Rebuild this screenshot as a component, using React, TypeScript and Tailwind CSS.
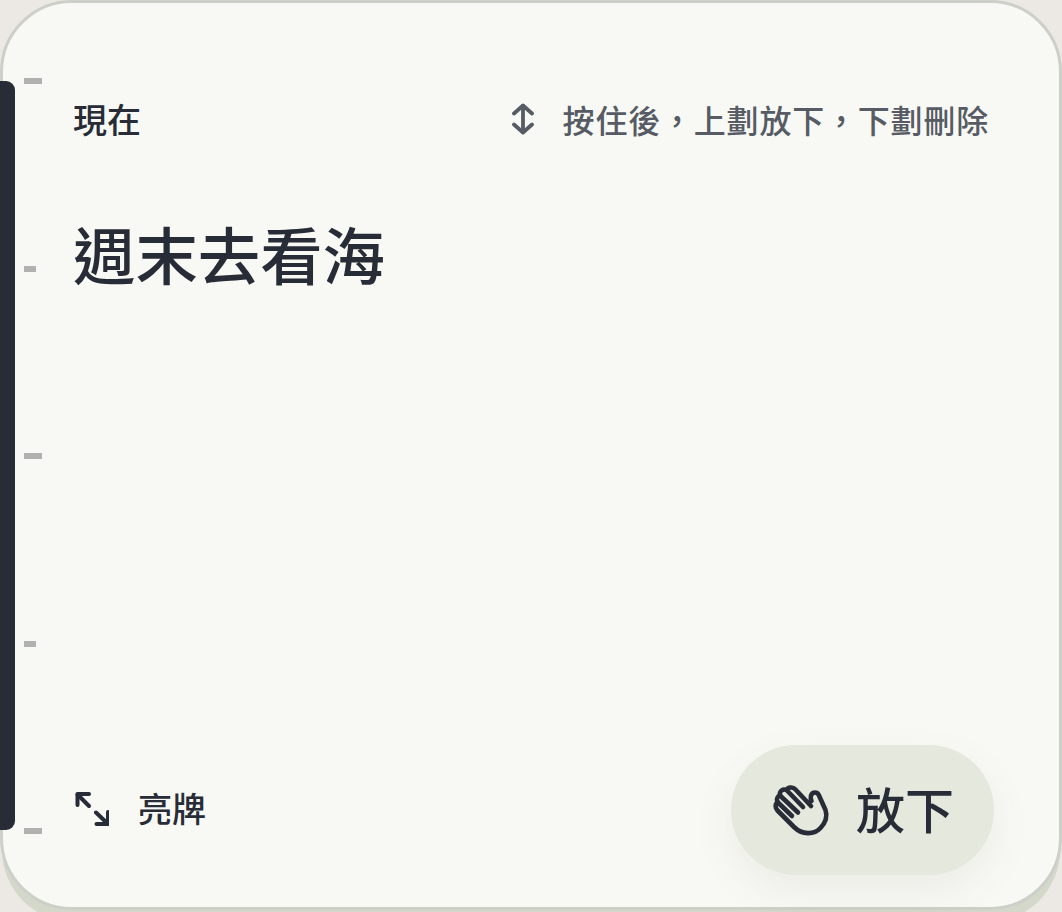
const ticks = ["w-[18px]", "w-3", "w-[18px]", "w-3", "w-[18px]"];

const fontStack = { fontFamily: '"Noto Sans CJK TC", "Noto Sans", sans-serif' };

const UpDownIcon = () => (
    <svg width="32" height="32" viewBox="0 0 32 32" fill="none" stroke="#565b64" strokeWidth="3.8" strokeLinecap="round" strokeLinejoin="round">
        <path d="M7 10.500L16 2.500L25 10.500" />
        <path d="M7 21.500L16 29.500L25 21.500" />
        <path d="M16 3V29" />
    </svg>
);

const ExpandIcon = () => (
    <svg width="36" height="36" viewBox="0 0 36 36" fill="none" stroke="#272c36" strokeWidth="4" strokeLinecap="round" strokeLinejoin="round">
        <path d="M4.500 14V3H16" />
        <path d="M4.500 3.500L16 15" />
        <path d="M35 21V33H23.500" />
        <path d="M34.500 32.500L23 21.500" />
    </svg>
);

const WaveIcon = () => (
    <svg width="70" height="70" viewBox="0 0 70 70" fill="none" stroke="#272c36" strokeWidth="4.600" strokeLinecap="round" strokeLinejoin="round">
        <path d="M43 31L27.500 14.500C25 11.500 20 12 18.500 15C15 13.500 11 16 12 20.500C9.500 21 8 24.500 9.500 27C7 29 7 33 9.500 35.500L26 52C34 60 46 60 52.500 53C58 47 59.500 41 57.500 35L51 20.500C49.500 16.500 44.500 16.500 43 20.500C42.500 22.500 42.500 24 43.500 26" />
        <path d="M18.500 15L35 32" />
        <path d="M12 20.500L30 37.500" />
        <path d="M9.500 27L24 41" />
    </svg>
);

const App = () => {
    return (
        <div className="relative h-[912px] w-[1062px] overflow-hidden bg-[#ece9e4]" style={fontStack}>
            {/* stacked card behind */}
            <div className="absolute -bottom-[10px] left-[2px] right-[2px] top-[40px] rounded-[72px] bg-[#d4d8ca]" />

            <div className="absolute inset-x-0 bottom-[2px] top-0 flex flex-col justify-between rounded-[72px] border-[3px] border-[#cdd0c8] bg-[#f8f9f4] pb-[32px] pl-[70px] pr-[65px] pt-[95px]">
                <div className="flex flex-col gap-[75px]">
                    <div className="flex items-center justify-between pr-[5px]">
                        <span className="text-[34px] font-medium leading-[42px] text-[#272c36]">現在</span>
                        <div className="flex items-center gap-6">
                            <UpDownIcon />
                            <span className="text-[32px] font-medium leading-[42px] tracking-[0.8px] text-[#565b64]">按住後，上劃放下，下劃刪除</span>
                        </div>
                    </div>
                    <h1 className="text-[62.400px] font-medium leading-[76px] text-[#272c36]">週末去看海</h1>
                </div>

                <div className="flex items-center justify-between">
                    <div className="flex items-center gap-[29px] pb-[2px]">
                        <ExpandIcon />
                        <span className="-mt-[2px] text-[34px] font-medium leading-[42px] text-[#272c36]">亮牌</span>
                    </div>
                    <button className="flex h-[130px] w-[263px] items-center justify-center gap-[18px] rounded-full bg-[#e4e8dd] pr-[3px] shadow-[0_16px_40px_rgba(90,95,80,0.08)]">
                        <WaveIcon />
                        <span className="-mt-[5px] text-[49px] font-medium leading-[60px] text-[#272c36]">放下</span>
                    </button>
                </div>
            </div>

            {/* scroll rail and ruler */}
            <div className="absolute bottom-[82px] left-0 top-[81px] w-[15px] rounded-r-[9px] bg-[#272c36]" />
            <div className="absolute bottom-[78px] left-[24px] top-[78px] flex flex-col justify-between">
                {ticks.map((w, i) => (
                    <div key={i} className={`h-[6px] ${w} bg-[#b1b2af]`} />
                ))}
            </div>
        </div>
    );
};

export default App;
